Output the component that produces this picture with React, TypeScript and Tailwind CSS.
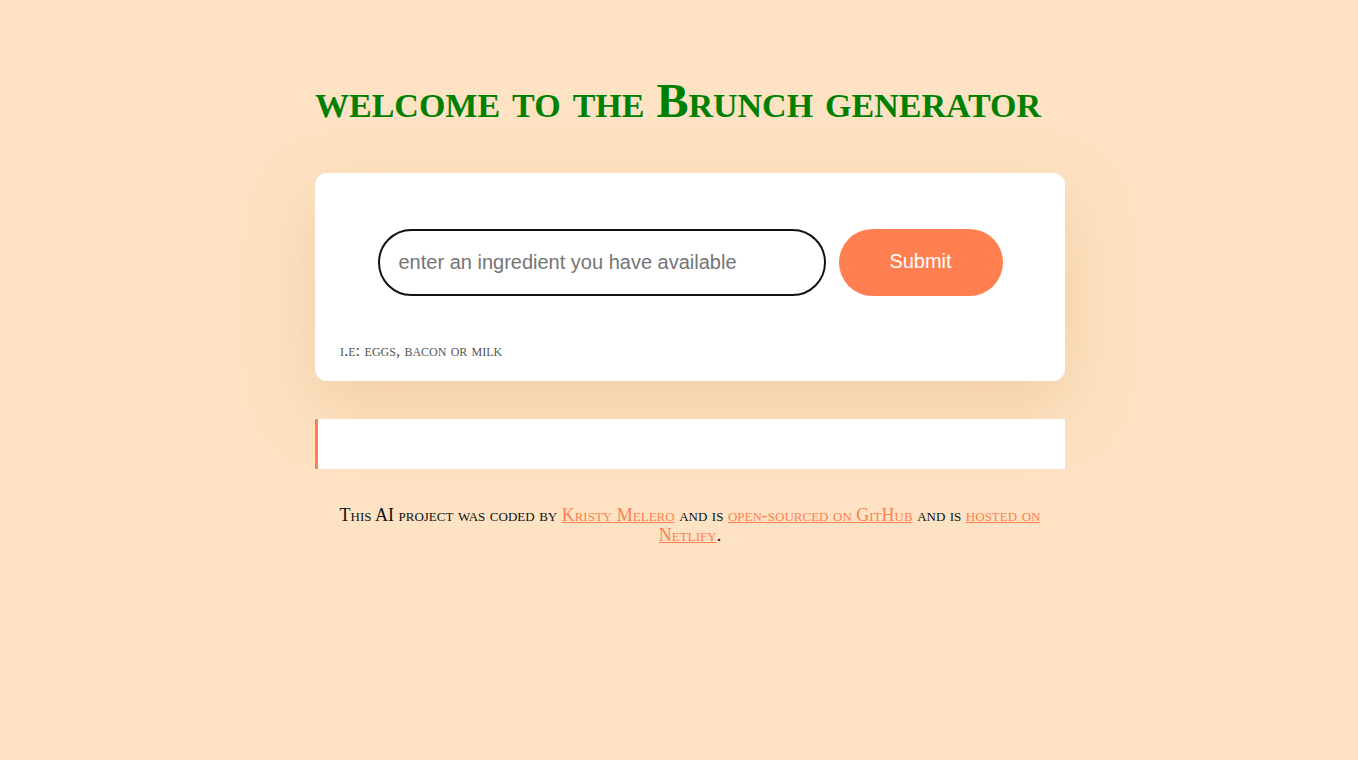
import React from 'react';

export default function App() {
  return (
    <div className="min-h-[760px] w-full bg-[#fde3c3] pl-[22px] font-['Liberation_Serif',serif]">
      <div className="mx-auto w-[750px] pt-[70px]">
        <h1 className="text-[48px] leading-[62px] font-bold text-[#008000] [font-variant:small-caps]">
          welcome to the Brunch generator
        </h1>

        <div className="mt-[41px] rounded-xl bg-white px-[25px] pt-[56px] pb-[20px] shadow-[0_25px_70px_rgba(210,140,70,0.25)]">
          <form className="flex items-center justify-center gap-[13px]" onSubmit={(e) => e.preventDefault()}>
            <input
              type="search"
              placeholder="enter an ingredient you have available"
              className="h-[67px] w-[448px] rounded-full border-2 border-[#111] px-[19px] font-['Liberation_Sans',sans-serif] text-[20px] text-[#333] placeholder:text-[#757575] outline-none"
            />
            <button
              type="submit"
              className="h-[67px] w-[164px] rounded-full bg-[#ff7f50] pb-[3px] font-['Liberation_Sans',sans-serif] text-[20px] text-white"
            >
              Submit
            </button>
          </form>
          <div className="mt-[45px] text-[17px] leading-[20px] text-[#555] [font-variant:small-caps]">
            i.e: eggs, bacon or milk
          </div>
        </div>

        <div className="mt-[38px] h-[50px] border-l-[3px] border-[#ff7f50] bg-white" />

        <footer className="mt-[36px] px-[14px] text-center text-[18px] leading-[20px] text-[#111] [font-variant:small-caps]">
          This AI project was coded by{' '}
          <a href="#" className="text-[#ff7f50] underline">Kristy Melero</a>{' '}
          and is{' '}
          <a href="#" className="text-[#ff7f50] underline">open-sourced on GitHub</a>{' '}
          and is{' '}
          <a href="#" className="text-[#ff7f50] underline">hosted on Netlify</a>.
        </footer>
      </div>
    </div>
  );
}
